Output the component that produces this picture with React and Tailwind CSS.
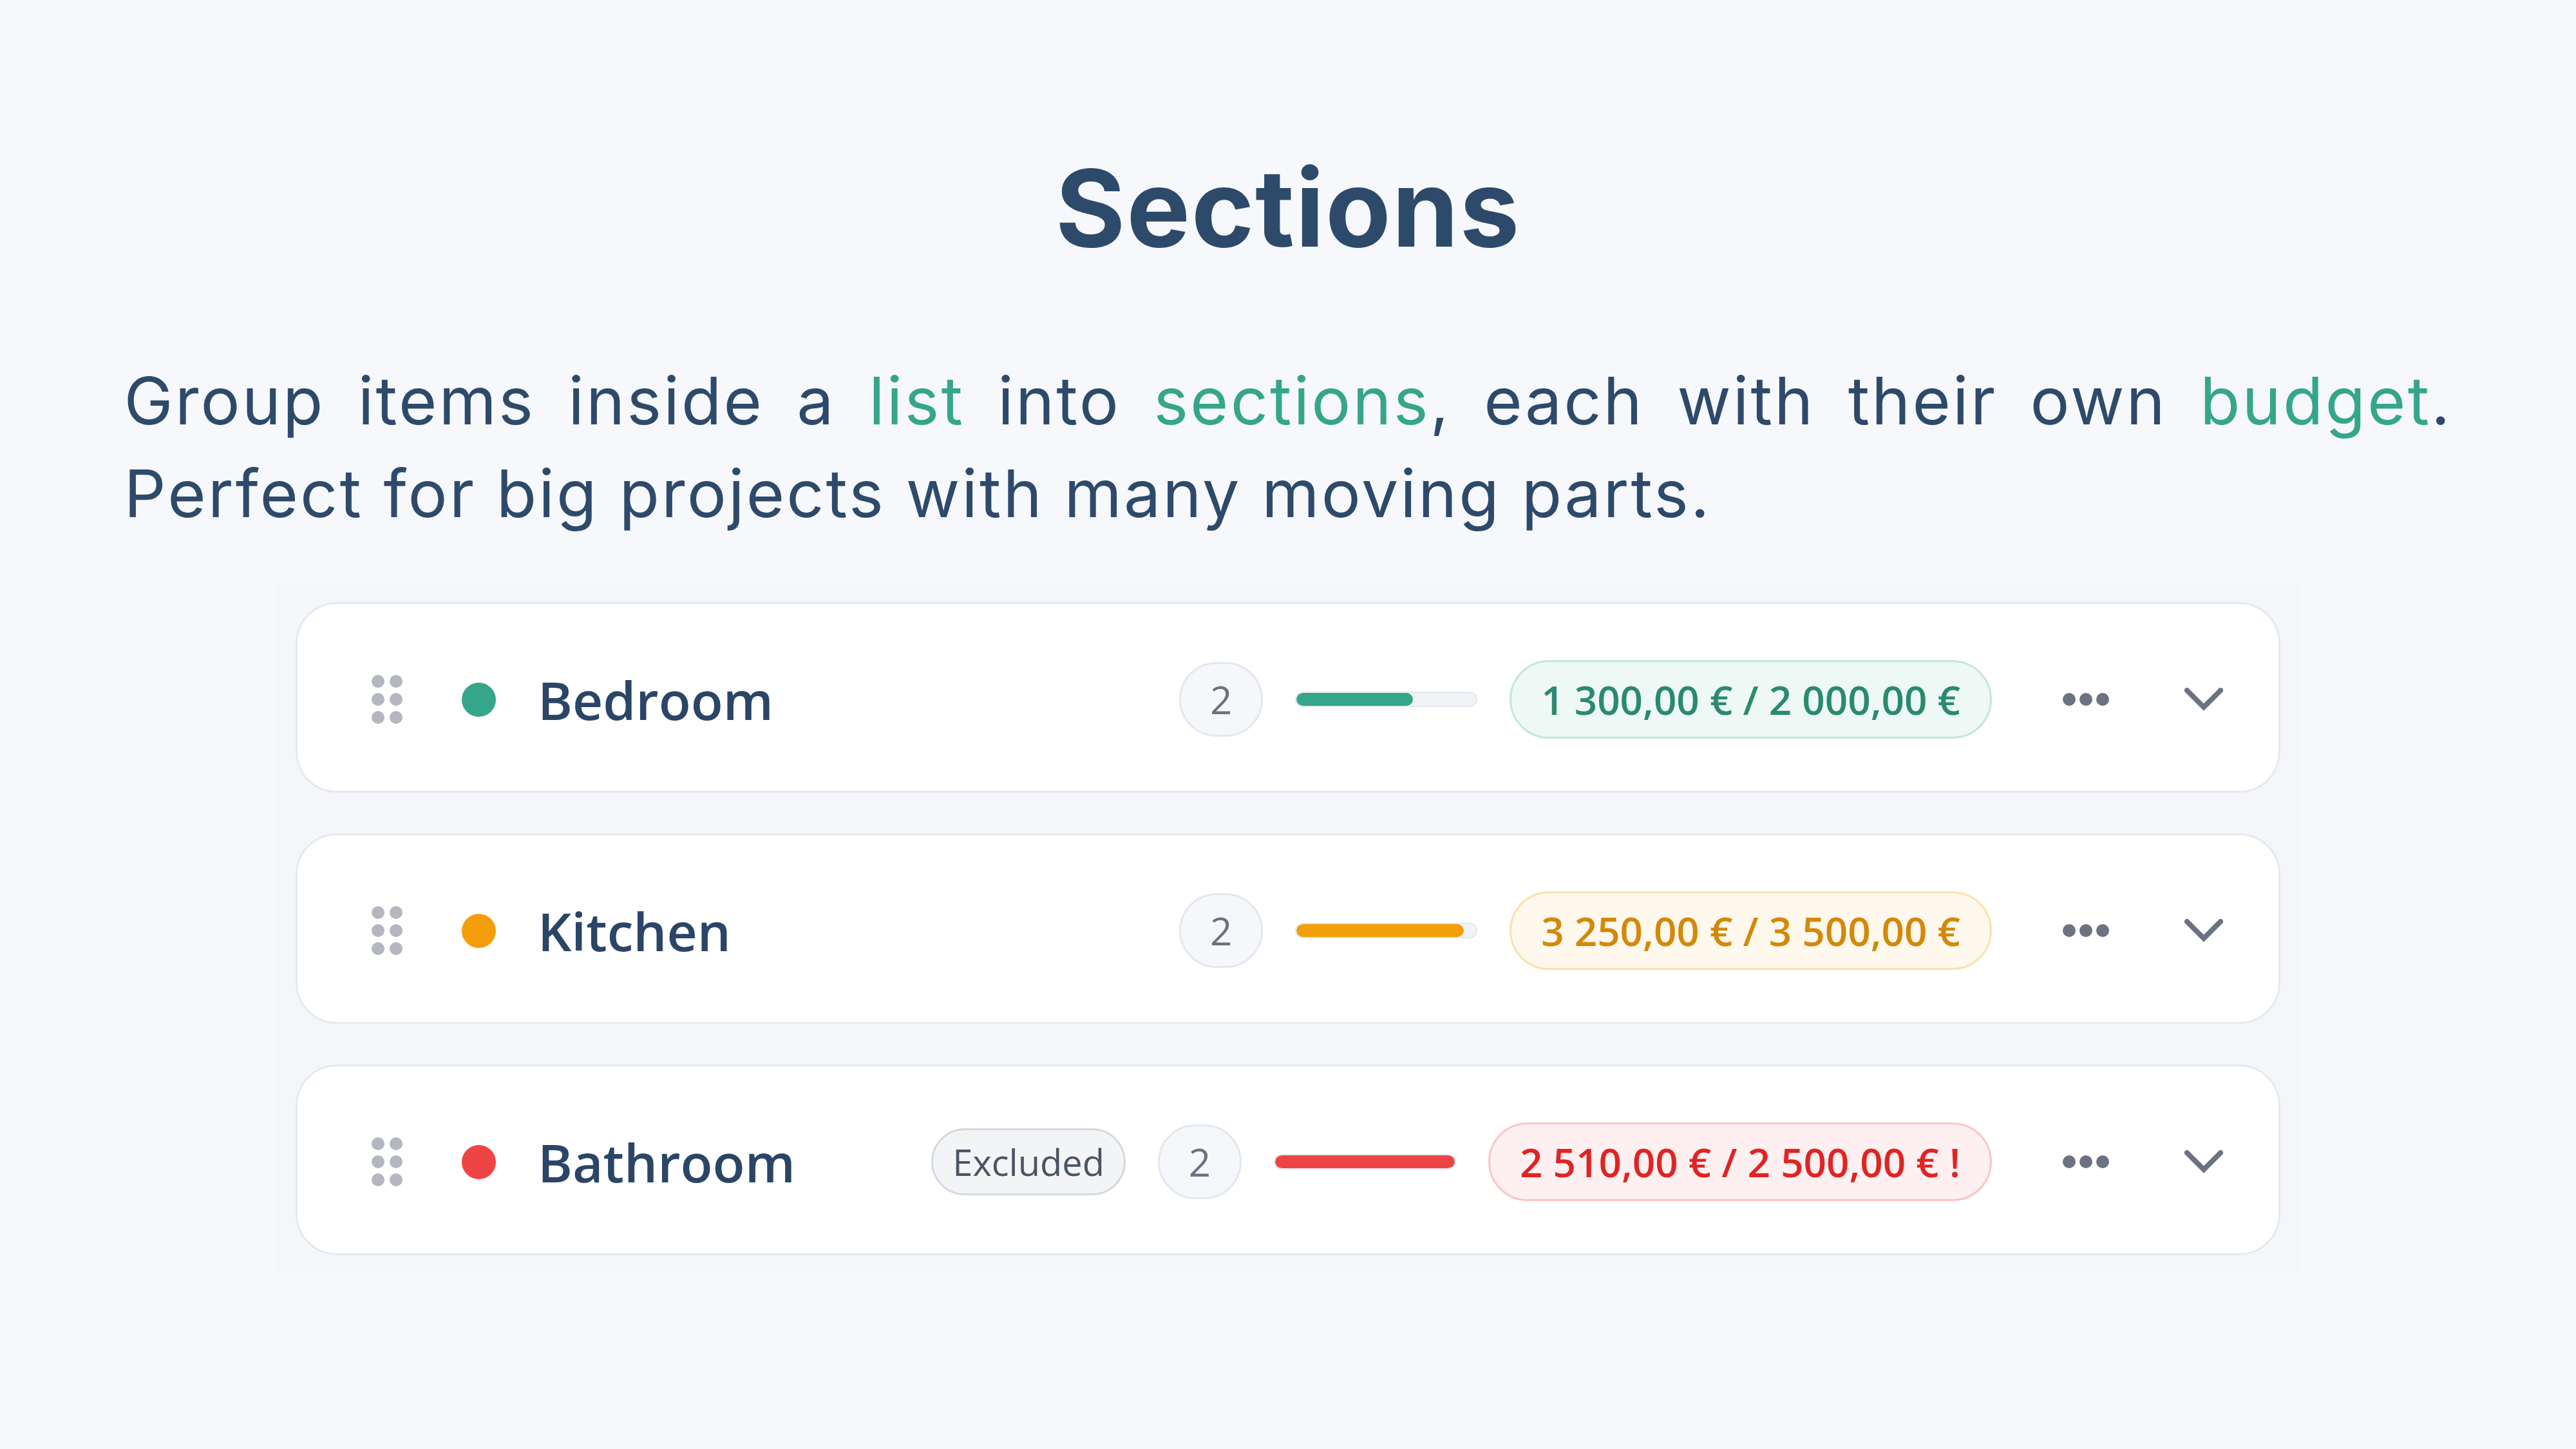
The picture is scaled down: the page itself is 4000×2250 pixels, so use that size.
import React from 'react';

const sections = [
    {
        name: 'Bedroom',
        dot: 'bg-[#35a68a]',
        bar: 'bg-[#35a68a]',
        pct: 65,
        budget: '1 300,00 € / 2 000,00 €',
        pill: 'bg-[#eef8f5] border-[#c4e7db] text-[#2a8a70]',
    },
    {
        name: 'Kitchen',
        dot: 'bg-[#f59e0b]',
        bar: 'bg-[#f59e0b]',
        pct: 93,
        budget: '3 250,00 € / 3 500,00 €',
        pill: 'bg-[#fff8ec] border-[#fde0aa] text-[#d4880a]',
    },
    {
        name: 'Bathroom',
        dot: 'bg-[#ef4444]',
        bar: 'bg-[#ef4444]',
        pct: 100,
        budget: '2 510,00 € / 2 500,00 € !',
        pill: 'bg-[#fef0f0] border-[#fbc5c5] text-[#e02424]',
        excluded: true,
    },
];

const DragHandle = () => (
    <div className="grid grid-cols-2 gap-x-[8px] gap-y-[8px] shrink-0">
        {[0, 1, 2, 3, 4, 5].map((i) => (
            <span key={i} className="w-[20px] h-[20px] rounded-full bg-[#b4b7bf]" />
        ))}
    </div>
);

const Dots = () => (
    <svg width="72" height="22" viewBox="0 0 72 22" className="shrink-0">
        <circle cx="10" cy="11" r="10" fill="#6b7280" />
        <circle cx="36" cy="11" r="10" fill="#6b7280" />
        <circle cx="62" cy="11" r="10" fill="#6b7280" />
    </svg>
);

const Chevron = () => (
    <svg width="60" height="36" viewBox="0 0 60 36" className="shrink-0">
        <path d="M4 4 L30 30 L56 4" fill="none" stroke="#6b7280" strokeWidth="8" strokeLinecap="square" />
    </svg>
);

const SectionCard = ({ s }) => (
    <div className="h-[296px] w-full bg-white rounded-[64px] border-[3px] border-[#e5e9f0] flex items-center pl-[115px] pr-[86px] pt-[6px] font-['Open_Sans',sans-serif]">
        <DragHandle />
        <span className={`ml-[92px] w-[53px] h-[53px] rounded-full shrink-0 ${s.dot}`} />
        <span className="ml-[65px] text-[82px] font-semibold text-[#2b4566] leading-none">{s.name}</span>
        <div className="flex-1" />
        <div className="flex items-center gap-[50px]">
            {s.excluded && (
                <span className="h-[104px] px-[30px] rounded-full border-[3px] border-[#d5d9df] bg-[#f3f4f6] text-[56px] text-[#4b5563] flex items-center leading-none">
                    Excluded
                </span>
            )}
            <span className="h-[116px] w-[130px] rounded-full border-[3px] border-[#e3e8ee] bg-[#f5f7fa] text-[60px] text-[#6b7280] flex items-center justify-center leading-none">
                2
            </span>
            <div className="w-[283px] h-[24px] rounded-full bg-[#f1f4f7] border-[2px] border-[#e4e8ee] overflow-hidden">
                <div className={`h-full rounded-full ${s.bar}`} style={{ width: `${s.pct}%` }} />
            </div>
            <span className={`h-[122px] px-[46px] rounded-full border-[3px] text-[62px] font-semibold flex items-center leading-none whitespace-nowrap ${s.pill}`}>
                {s.budget}
            </span>
        </div>
        <div className="ml-[110px]">
            <Dots />
        </div>
        <div className="ml-[117px]">
            <Chevron />
        </div>
    </div>
);

export default function App() {
    return (
        <div className="min-h-screen w-full bg-[#f6f8fb] flex flex-col items-center pt-[240px] pb-[200px] font-['Inter',sans-serif]">
            <h1 className="text-[166px] leading-none font-bold text-[#2e4a6b] tracking-[0.01em]">Sections</h1>

            <p className="mt-[144px] w-[3615px] text-justify text-[102px] leading-[144px] tracking-[0.03em] text-[#2e4a6b]">
                Group items inside a <span className="text-[#35a68a]">list</span> into{' '}
                <span className="text-[#35a68a]">sections</span>, each with their own{' '}
                <span className="text-[#35a68a]">budget</span>. Perfect for big projects with many moving parts.
            </p>

            <div className="mt-[69px] w-[3144px] bg-[#f4f6f9] px-[31px] py-[28px] flex flex-col gap-[63px]">
                {sections.map((s) => (
                    <SectionCard key={s.name} s={s} />
                ))}
            </div>
        </div>
    );
}
